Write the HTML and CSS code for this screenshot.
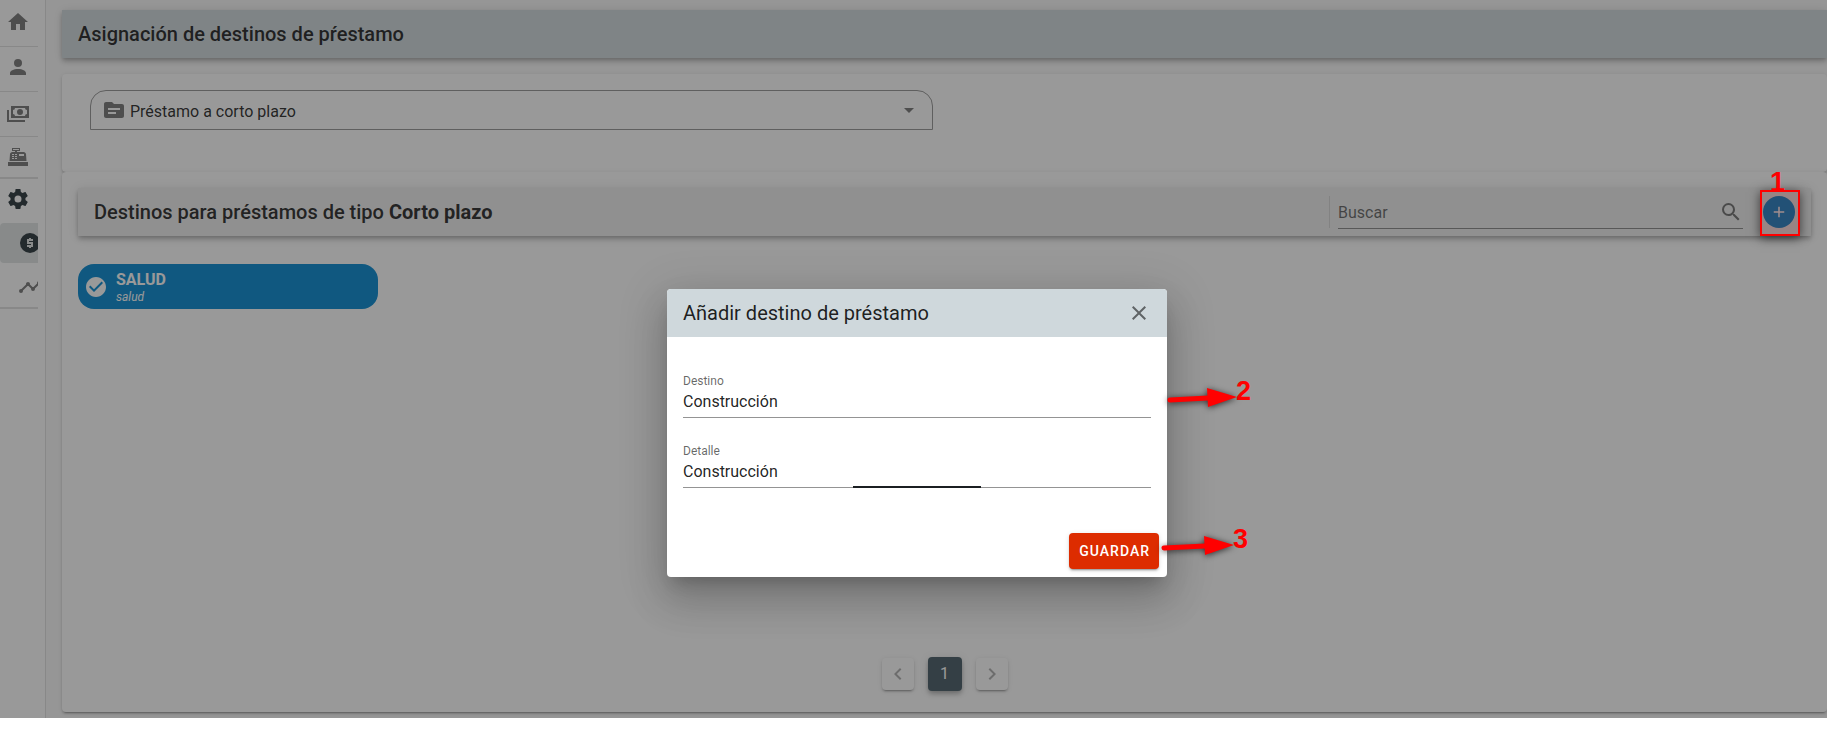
FILE: index.html
```html
<!DOCTYPE html>
<html lang="es">
<head>
<meta charset="utf-8">
<title>Asignación de destinos</title>
<link rel="stylesheet" href="styles.css">
</head>
<body>
<div class="app">
  <nav class="sidebar" aria-label="Menú principal">
    <div class="menu">
      <a class="item" href="#inicio" aria-label="Inicio"><svg class="icon" viewBox="0 0 24 24"><path d="M10,20V14H14V20H19V12H22L12,3L2,12H5V20H10Z"/></svg></a>
      <a class="item" href="#personas" aria-label="Personas"><svg class="icon" viewBox="0 0 24 24"><path d="M12,4A4,4 0 0,1 16,8A4,4 0 0,1 12,12A4,4 0 0,1 8,8A4,4 0 0,1 12,4M12,14C16.42,14 20,15.79 20,18V20H4V18C4,15.79 7.58,14 12,14Z"/></svg></a>
      <a class="item" href="#prestamos" aria-label="Préstamos"><svg class="icon" viewBox="0 0 24 24"><path d="M5,6H23V18H5V6M14,9A3,3 0 0,1 17,12A3,3 0 0,1 14,15A3,3 0 0,1 11,12A3,3 0 0,1 14,9M9,8A2,2 0 0,1 7,10V14A2,2 0 0,1 9,16H19A2,2 0 0,1 21,14V10A2,2 0 0,1 19,8H9M1,10H3V20H19V22H1V10Z"/></svg></a>
      <a class="item item-last" href="#caja" aria-label="Caja"><svg class="icon" viewBox="0 0 24 24"><path d="M2,17H22V21H2V17M6.25,7H9V6H6V3H14V6H11V7H17.8C18.8,7 19.8,8 20,9L20.5,16H3.5L4,9C4.2,8 5.2,7 6.25,7M13,9V11H18V9H13M6,9V10H8V9H6M9,9V10H11V9H9M6,11V12H8V11H6M9,11V12H11V11H9M6,13V14H8V13H6M9,13V14H11V13H9M7,4V5H13V4H7Z"/></svg></a>
      <div class="group">
        <a class="item current" href="#ajustes" aria-label="Ajustes"><svg class="icon" viewBox="0 0 24 24"><path d="M12,15.5A3.5,3.5 0 0,1 8.5,12A3.5,3.5 0 0,1 12,8.5A3.5,3.5 0 0,1 15.5,12A3.5,3.5 0 0,1 12,15.5M19.43,12.97C19.47,12.65 19.5,12.33 19.5,12C19.5,11.67 19.47,11.34 19.43,11L21.54,9.37C21.73,9.22 21.78,8.95 21.66,8.73L19.66,5.27C19.54,5.05 19.27,4.96 19.05,5.05L16.56,6.05C16.04,5.66 15.5,5.32 14.87,5.07L14.5,2.42C14.46,2.18 14.25,2 14,2H10C9.75,2 9.54,2.18 9.5,2.42L9.13,5.07C8.5,5.32 7.96,5.66 7.44,6.05L4.95,5.05C4.73,4.96 4.46,5.05 4.34,5.27L2.34,8.73C2.21,8.95 2.27,9.22 2.46,9.37L4.57,11C4.53,11.34 4.5,11.67 4.5,12C4.5,12.33 4.53,12.65 4.57,12.97L2.46,14.63C2.27,14.78 2.21,15.05 2.34,15.27L4.34,18.73C4.46,18.95 4.73,19.03 4.95,18.95L7.44,17.94C7.96,18.34 8.5,18.68 9.13,18.93L9.5,21.58C9.54,21.82 9.75,22 10,22H14C14.25,22 14.46,21.82 14.5,21.58L14.87,18.93C15.5,18.67 16.04,18.34 16.56,17.94L19.05,18.95C19.27,19.03 19.54,18.95 19.66,18.73L21.66,15.27C21.78,15.05 21.73,14.78 21.54,14.63L19.43,12.97Z"/></svg></a>
        <a class="item nested current selected" href="#destinos" aria-label="Destinos"><svg class="icon" viewBox="0 0 24 24"><circle cx="12" cy="12" r="10"/><path class="coin" d="M15 9H10V12H14V15H9M12 7V9M12 15V17"/></svg></a>
        <a class="item nested" href="#tasas" aria-label="Tasas"><svg class="icon" viewBox="0 0 24 24"><path d="M3,14L3.5,14.07L8.07,9.5C7.89,8.85 8.06,8.11 8.59,7.59C9.37,6.8 10.63,6.8 11.41,7.59C11.94,8.11 12.11,8.85 11.93,9.5L14.5,12.07L15,12C15.18,12 15.35,12 15.5,12.07L19.07,8.5C19,8.35 19,8.18 19,8A2,2 0 0,1 21,6A2,2 0 0,1 23,8A2,2 0 0,1 21,10C20.82,10 20.65,10 20.5,9.93L16.93,13.5C17,13.65 17,13.82 17,14A2,2 0 0,1 15,16A2,2 0 0,1 13,14L13.07,13.5L10.5,10.93C10.18,11 9.82,11 9.5,10.93L4.93,15.5L5,16A2,2 0 0,1 3,18A2,2 0 0,1 1,16A2,2 0 0,1 3,14Z"/></svg></a>
      </div>
    </div>
  </nav>

  <main class="content">
    <header class="toolbar page-bar"><h1 class="title">Asignación de destinos de pŕestamo</h1></header>

    <section class="card filter">
      <div class="select-box">
        <svg class="icon" viewBox="0 0 24 24"><path d="M20 6h-8l-2-2H4c-1.1 0-1.99.9-1.99 2L2 18c0 1.1.9 2 2 2h16c1.1 0 2-.9 2-2V8c0-1.1-.9-2-2-2zm-6 10H6v-2h8v2zm4-4H6v-2h12v2z"/></svg>
        <select class="select" aria-label="Tipo de préstamo"><option>Préstamo a corto plazo</option></select>
        <svg class="icon caret" viewBox="0 0 24 24"><path d="M7,10L12,15L17,10H7Z"/></svg>
      </div>
    </section>

    <section class="card list">
      <div class="toolbar list-bar">
        <h2 class="title">Destinos para préstamos de tipo <b>Corto plazo</b></h2>
        <div class="tools">
          <label class="search">
            <input class="search-input" type="text" placeholder="Buscar" aria-label="Buscar">
            <svg class="icon" viewBox="0 0 24 24"><path d="M9.5,3A6.5,6.5 0 0,1 16,9.5C16,11.11 15.41,12.59 14.44,13.73L14.71,14H15.5L20.5,19L19,20.5L14,15.5V14.71L13.73,14.44C12.59,15.41 11.11,16 9.5,16A6.5,6.5 0 0,1 3,9.5A6.5,6.5 0 0,1 9.5,3M9.5,5C7,5 5,7 5,9.5C5,12 7,14 9.5,14C12,14 14,12 14,9.5C14,7 12,5 9.5,5Z"/></svg>
          </label>
          <div class="add-wrap">
            <button class="add" type="button" aria-label="Añadir"><svg class="icon small" viewBox="0 0 24 24"><path d="M19,13H13V19H11V13H5V11H11V5H13V11H19V13Z"/></svg></button>
            <div class="mark"><span class="num">1</span></div>
          </div>
        </div>
      </div>
      <button class="chip" type="button">
        <svg class="icon" viewBox="0 0 24 24"><path d="M12 2C6.5 2 2 6.5 2 12S6.5 22 12 22 22 17.5 22 12 17.5 2 12 2M10 17L5 12L6.41 10.59L10 14.17L17.59 6.58L19 8L10 17Z"/></svg>
        <span class="chip-text"><strong class="chip-name">SALUD</strong><em class="chip-detail">salud</em></span>
      </button>
      <nav class="pager" aria-label="Paginación">
        <button class="page" type="button" aria-label="Anterior"><svg class="icon" viewBox="0 0 24 24"><path d="M15.41,16.58L10.83,12L15.41,7.41L14,6L8,12L14,18L15.41,16.58Z"/></svg></button>
        <button class="page active" type="button">1</button>
        <button class="page" type="button" aria-label="Siguiente"><svg class="icon" viewBox="0 0 24 24"><path d="M8.59,16.58L13.17,12L8.59,7.41L10,6L16,12L10,18L8.59,16.58Z"/></svg></button>
      </nav>
    </section>
  </main>

  <div class="scrim"></div>
  <div class="dialog-layer">
    <form class="dialog" role="dialog" aria-labelledby="dlg-title">
      <header class="dialog-head">
        <h2 class="dialog-title" id="dlg-title">Añadir destino de préstamo</h2>
        <button class="close" type="button" aria-label="Cerrar"><svg class="icon" viewBox="0 0 24 24"><path d="M19,6.41L17.59,5L12,10.59L6.41,5L5,6.41L10.59,12L5,17.59L6.41,19L12,13.41L17.59,19L19,17.59L13.41,12L19,6.41Z"/></svg></button>
      </header>
      <div class="fields">
        <div class="field"><label class="label" for="destino">Destino</label><input class="input" id="destino" type="text" value="Construcción"></div>
        <div class="field focusing"><label class="label" for="detalle">Detalle</label><input class="input" id="detalle" type="text" value="Construcción"></div>
      </div>
      <footer class="actions"><button class="save" type="button">GUARDAR</button></footer>
      <div class="callout callout-field">
        <svg class="arrow" viewBox="0 0 74 24"><path class="shaft" d="M5 15L43 13"/><path d="M42 3L72 12L43 22Z"/></svg><span class="num">2</span>
      </div>
      <div class="callout callout-save">
        <svg class="arrow" viewBox="0 0 74 24"><path class="shaft" d="M2 15L43 13"/><path d="M42 3L72 12L43 22Z"/></svg><span class="num">3</span>
      </div>
    </form>
  </div>
</div>
</body>
</html>
```
FILE: styles.css
```css
* { box-sizing: border-box; }

body {
  margin: 0;
  background: #fff;
  color: rgba(0, 0, 0, 0.87);
  font: 16px/24px Roboto, sans-serif;
}

button, input, select { font: inherit; color: inherit; border: 0; margin: 0; padding: 0; background: none; outline: 0; }
h1, h2 { margin: 0; }

.app { position: relative; display: flex; align-items: stretch; background: #fafafa; overflow: hidden; }

.icon { width: 24px; height: 24px; flex: none; display: block; fill: currentColor; color: rgba(0, 0, 0, 0.54); }
.icon.small { width: 18px; height: 18px; }

/* Sidebar */
.sidebar { flex: none; width: 46px; padding: 2px 7px 0 0; background: #fff; border-right: 1px solid #e0e0e0; }
.menu { overflow: hidden; }
.item { display: flex; align-items: center; height: 45px; padding: 0 0 5px 6px; border-bottom: 1px solid #e0e0e0; }
.item-last { height: 40px; padding-bottom: 0; border: 0; }
.group { display: grid; gap: 4px; border-top: 2px solid #e0e0e0; border-bottom: 2px solid #e0e0e0; }
.group .item { height: 40px; padding-bottom: 0; border: 0; }
.group .nested { padding-left: 18px; }
.current .icon { color: #263238; }
.selected { background: #e0e4e4; border-radius: 4px; }
.coin { fill: none; stroke: #e0e4e4; stroke-width: 2; }

/* Page */
.content { flex: 1; min-width: 0; padding: 10px 0 6px 16px; }
.toolbar {
  display: flex;
  align-items: center;
  justify-content: space-between;
  height: 48px;
  padding: 0 16px;
  box-shadow: 0 2px 4px -1px rgba(0, 0, 0, 0.2), 0 4px 5px rgba(0, 0, 0, 0.14), 0 1px 10px rgba(0, 0, 0, 0.12);
}
.page-bar { margin-bottom: 16px; background: #cfd8dc; }
.list-bar { background: #eee; }
.title { font-size: 20px; font-weight: 500; line-height: 24px; white-space: nowrap; }
.card {
  background: #fff;
  border-radius: 4px;
  box-shadow: 0 3px 1px -2px rgba(0, 0, 0, 0.2), 0 2px 2px rgba(0, 0, 0, 0.14), 0 1px 5px rgba(0, 0, 0, 0.12);
}
.filter { display: grid; grid-template-columns: 1fr 1fr; gap: 24px; padding: 16px 28px 42px; }
.select-box {
  display: flex;
  align-items: center;
  gap: 4px;
  height: 40px;
  padding: 0 11px;
  border: 1px solid #949494;
  border-radius: 16px 16px 0 0;
}
.select { flex: 1; height: 32px; padding-top: 3px; appearance: none; }

.list { display: flex; flex-direction: column; min-height: 540px; padding: 16px 16px 21px; }
.tools { display: flex; align-items: center; height: 32px; padding-left: 8px; border-left: 1px solid #d4d4d4; }
.search { display: flex; align-items: center; width: 405px; height: 34px; margin-right: 20px; border-bottom: 1px solid #888; }
.search-input { flex: 1; min-width: 0; padding-top: 2px; }
.search-input::placeholder { color: rgba(0, 0, 0, 0.6); opacity: 1; }
.add-wrap { position: relative; }
.add { display: grid; place-items: center; width: 32px; height: 32px; border-radius: 50%; background: #0288d1; }
.add .icon { color: #fff; }

.chip {
  display: flex;
  align-items: center;
  gap: 8px;
  width: 300px;
  height: 45px;
  margin-top: 28px;
  padding: 0 6px;
  border-radius: 16px;
  background: #0288d1;
  color: #fff;
  text-align: left;
}
.chip .icon { color: #fff; }
.chip-text { display: grid; padding-top: 2px; }
.chip-name { font-size: 16px; line-height: 18px; font-weight: 700; }
.chip-detail { font-size: 12px; line-height: 16px; }

.pager { display: flex; align-items: center; justify-content: center; gap: 14px; margin-top: auto; }
.page {
  display: grid;
  place-items: center;
  width: 32px;
  height: 32px;
  border-radius: 4px;
  background: #fff;
  box-shadow: 0 3px 1px -2px rgba(0, 0, 0, 0.2), 0 2px 2px rgba(0, 0, 0, 0.14), 0 1px 5px rgba(0, 0, 0, 0.12);
}
.page .icon { color: rgba(0, 0, 0, 0.32); }
.page.active {
  width: 34px;
  height: 34px;
  background: #455a64;
  color: #fff;
  box-shadow: 0 2px 4px -1px rgba(0, 0, 0, 0.2), 0 4px 5px rgba(0, 0, 0, 0.14), 0 1px 10px rgba(0, 0, 0, 0.12);
}

/* Dialog */
.scrim { position: absolute; inset: 0; background: #212121; opacity: 0.46; }
.dialog-layer { position: absolute; inset: 0; display: flex; justify-content: center; align-items: flex-start; padding: 289px 0 0 7px; }
.dialog {
  position: relative;
  width: 500px;
  border-radius: 4px;
  background: #fff;
  box-shadow: 0 11px 15px -7px rgba(0, 0, 0, 0.2), 0 24px 38px 3px rgba(0, 0, 0, 0.14), 0 9px 46px 8px rgba(0, 0, 0, 0.12);
}
.dialog-head { display: flex; align-items: center; justify-content: space-between; height: 48px; padding: 0 16px; border-radius: 4px 4px 0 0; background: #cfd8dc; }
.dialog-title { font-size: 20px; font-weight: 400; line-height: 24px; }
.fields { display: grid; gap: 25px; padding: 36px 16px 45px; }
.field { position: relative; display: grid; align-content: start; gap: 1px; height: 45px; border-bottom: 1px solid #949494; }
.label { font-size: 12px; line-height: 16px; color: rgba(0, 0, 0, 0.6); }
.input { height: 24px; }
.focusing::after { content: ""; position: absolute; left: 170px; bottom: -1px; width: 128px; height: 2px; background: #1b1f22; }
.actions { display: flex; justify-content: flex-end; padding: 0 8px 8px; }
.save {
  height: 36px;
  padding: 0 9px 0 10px;
  border-radius: 4px;
  background: #dd2c00;
  color: #fff;
  font-size: 14px;
  font-weight: 500;
  letter-spacing: 1px;
  box-shadow: 0 3px 1px -2px rgba(0, 0, 0, 0.2), 0 2px 2px rgba(0, 0, 0, 0.14), 0 1px 5px rgba(0, 0, 0, 0.12);
}

/* Numbered step marks */
.num { color: #f00; font: 700 27px/28px "Liberation Sans", Arial, sans-serif; }
.mark {
  position: absolute;
  z-index: 2;
  inset: -6px -5px -8px -3px;
  border: 2px solid #f00;
  background: rgba(255, 0, 0, 0.08);
  box-shadow: 0 2px 10px rgba(0, 0, 0, 0.6);
  pointer-events: none;
}
.mark .num { position: absolute; left: 8px; bottom: 38px; }
.callout { position: absolute; display: flex; align-items: flex-start; }
.callout .num { margin: -4px 0 0 -3px; }
.callout-field { left: 498px; top: 92px; }
.callout-save { left: 495px; top: 240px; }
.arrow { width: 74px; height: 24px; margin-top: 4px; overflow: visible; fill: #f00; filter: drop-shadow(0 1px 3px rgba(0, 0, 0, 0.7)); }
.shaft { stroke: #f00; stroke-width: 5; stroke-linecap: round; }
```
